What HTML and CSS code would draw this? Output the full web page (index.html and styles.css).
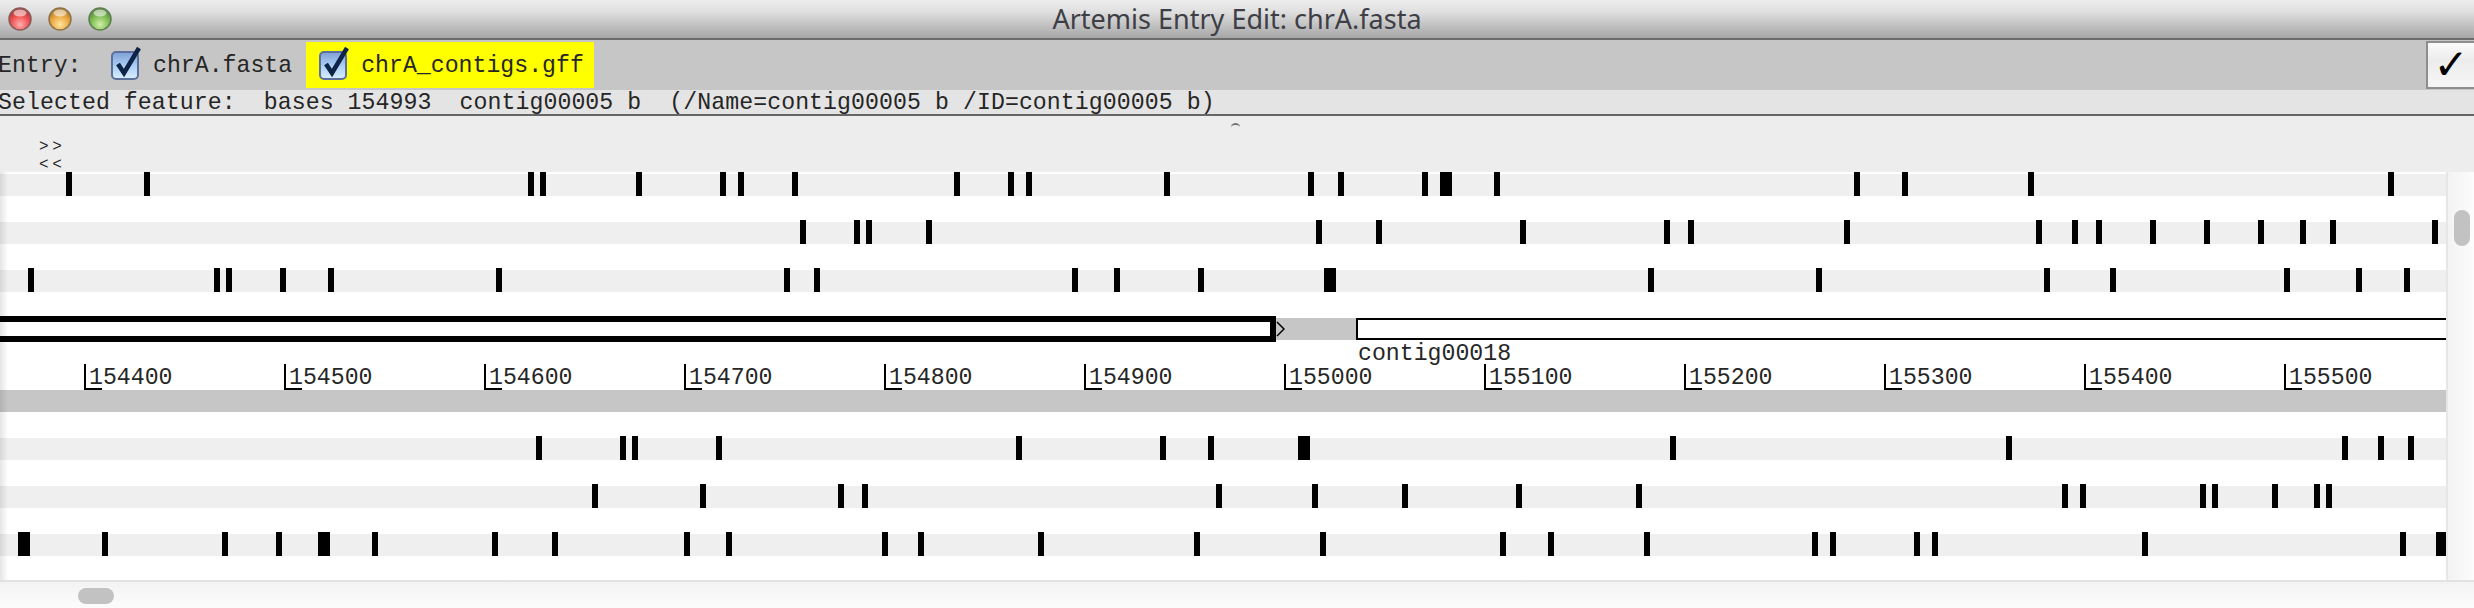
FILE: index.html
```html
<!DOCTYPE html>
<html lang="en">
<head>
<meta charset="utf-8">
<title>Artemis Entry Edit: chrA.fasta</title>
<link rel="stylesheet" href="styles.css">
</head>
<body>
<svg class="defs" width="0" height="0" aria-hidden="true">
  <defs>
    <linearGradient id="boxfill" x1="0" y1="0" x2="0" y2="1">
      <stop offset="0" stop-color="#7f9fd6"/>
      <stop offset="0.5" stop-color="#a9cdf2"/>
      <stop offset="1" stop-color="#d9effd"/>
    </linearGradient>
    <symbol id="tick-box" viewBox="0 0 32 34">
      <rect x="1" y="6" width="26" height="27" rx="4" fill="url(#boxfill)" stroke="#5d6f9c" stroke-width="2"/>
      <path d="M7 18 L13 27 L28 2" fill="none" stroke="#0d2347" stroke-width="4.5"/>
    </symbol>
    <radialGradient id="red" cx="0.5" cy="0.75" r="0.7">
      <stop offset="0" stop-color="#ffb0b0"/><stop offset="0.6" stop-color="#f04f4f"/><stop offset="1" stop-color="#a83a3a"/>
    </radialGradient>
    <radialGradient id="amber" cx="0.5" cy="0.75" r="0.7">
      <stop offset="0" stop-color="#ffe6a0"/><stop offset="0.6" stop-color="#eaa53e"/><stop offset="1" stop-color="#a67a32"/>
    </radialGradient>
    <radialGradient id="green" cx="0.5" cy="0.75" r="0.7">
      <stop offset="0" stop-color="#d0f0a8"/><stop offset="0.6" stop-color="#7dbb52"/><stop offset="1" stop-color="#58843f"/>
    </radialGradient>
  </defs>
</svg>
<header class="titlebar">
  <div class="lights">
    <svg class="light" viewBox="0 0 24 24"><circle cx="12" cy="12" r="11" fill="url(#red)" stroke="#8a5a5a" stroke-width="1.5"/><ellipse cx="12" cy="6" rx="6.5" ry="3.5" fill="#fff" opacity=".55"/></svg>
    <svg class="light" viewBox="0 0 24 24"><circle cx="12" cy="12" r="11" fill="url(#amber)" stroke="#8f7448" stroke-width="1.5"/><ellipse cx="12" cy="6" rx="6.5" ry="3.5" fill="#fff" opacity=".55"/></svg>
    <svg class="light" viewBox="0 0 24 24"><circle cx="12" cy="12" r="11" fill="url(#green)" stroke="#5f7f50" stroke-width="1.5"/><ellipse cx="12" cy="6" rx="6.5" ry="3.5" fill="#fff" opacity=".55"/></svg>
  </div>
  <div class="title">Artemis Entry Edit: chrA.fasta</div>
</header>
<div class="toolbar">
  <span class="entry-label">Entry:</span>
  <label class="entry"><svg class="check"><use href="#tick-box"/></svg><span>chrA.fasta</span></label>
  <label class="entry entry-active"><svg class="check"><use href="#tick-box"/></svg><span>chrA_contigs.gff</span></label>
  <button class="done" type="button">✓</button>
</div>
<div class="info">Selected feature:  bases 154993  contig00005 b  (/Name=contig00005 b /ID=contig00005 b)</div>
<div class="nav-area">
  <span class="handle"></span>
  <div class="nav-marks"><div>&gt;&gt;</div><div>&lt;&lt;</div></div>
</div>
<main class="viewer">
  <div class="canvas">
    <div class="track track-first">
      <i style="left:66px"></i><i style="left:144px"></i><i style="left:528px"></i><i style="left:540px"></i><i style="left:636px"></i><i style="left:720px"></i><i style="left:738px"></i><i style="left:792px"></i><i style="left:954px"></i><i style="left:1008px"></i><i style="left:1026px"></i><i style="left:1164px"></i><i style="left:1308px"></i><i style="left:1338px"></i><i style="left:1422px"></i><i class="wide" style="left:1440px"></i><i style="left:1494px"></i><i style="left:1854px"></i><i style="left:1902px"></i><i style="left:2028px"></i><i style="left:2388px"></i>
    </div>
    <div class="track">
      <i style="left:800px"></i><i style="left:854px"></i><i style="left:866px"></i><i style="left:926px"></i><i style="left:1316px"></i><i style="left:1376px"></i><i style="left:1520px"></i><i style="left:1664px"></i><i style="left:1688px"></i><i style="left:1844px"></i><i style="left:2036px"></i><i style="left:2072px"></i><i style="left:2096px"></i><i style="left:2150px"></i><i style="left:2204px"></i><i style="left:2258px"></i><i style="left:2300px"></i><i style="left:2330px"></i><i style="left:2432px"></i>
    </div>
    <div class="track">
      <i style="left:28px"></i><i style="left:214px"></i><i style="left:226px"></i><i style="left:280px"></i><i style="left:328px"></i><i style="left:496px"></i><i style="left:784px"></i><i style="left:814px"></i><i style="left:1072px"></i><i style="left:1114px"></i><i style="left:1198px"></i><i class="wide" style="left:1324px"></i><i style="left:1648px"></i><i style="left:1816px"></i><i style="left:2044px"></i><i style="left:2110px"></i><i style="left:2284px"></i><i style="left:2356px"></i><i style="left:2404px"></i>
    </div>
    <div class="contigs">
      <div class="contig contig-selected"></div>
      <div class="gap">
        <svg class="arrow" viewBox="0 0 9 16"><path d="M1 1 L8 8 L1 15" fill="none" stroke="#000" stroke-width="1.5"/></svg>
      </div>
      <div class="contig contig-next"></div>
    </div>
    <div class="contig-labels">contig00018</div>
    <div class="ruler">
      <span class="mark">154400</span><span class="mark">154500</span><span class="mark">154600</span><span class="mark">154700</span><span class="mark">154800</span><span class="mark">154900</span><span class="mark">155000</span><span class="mark">155100</span><span class="mark">155200</span><span class="mark">155300</span><span class="mark">155400</span><span class="mark">155500</span>
    </div>
    <div class="strand-bar"></div>
    <div class="track">
      <i style="left:536px"></i><i style="left:620px"></i><i style="left:632px"></i><i style="left:716px"></i><i style="left:1016px"></i><i style="left:1160px"></i><i style="left:1208px"></i><i class="wide" style="left:1298px"></i><i style="left:1670px"></i><i style="left:2006px"></i><i style="left:2342px"></i><i style="left:2378px"></i><i style="left:2408px"></i>
    </div>
    <div class="track">
      <i style="left:592px"></i><i style="left:700px"></i><i style="left:838px"></i><i style="left:862px"></i><i style="left:1216px"></i><i style="left:1312px"></i><i style="left:1402px"></i><i style="left:1516px"></i><i style="left:1636px"></i><i style="left:2062px"></i><i style="left:2080px"></i><i style="left:2200px"></i><i style="left:2212px"></i><i style="left:2272px"></i><i style="left:2314px"></i><i style="left:2326px"></i>
    </div>
    <div class="track">
      <i class="wide" style="left:18px"></i><i style="left:102px"></i><i style="left:222px"></i><i style="left:276px"></i><i class="wide" style="left:318px"></i><i style="left:372px"></i><i style="left:492px"></i><i style="left:552px"></i><i style="left:684px"></i><i style="left:726px"></i><i style="left:882px"></i><i style="left:918px"></i><i style="left:1038px"></i><i style="left:1194px"></i><i style="left:1320px"></i><i style="left:1500px"></i><i style="left:1548px"></i><i style="left:1644px"></i><i style="left:1812px"></i><i style="left:1830px"></i><i style="left:1914px"></i><i style="left:1932px"></i><i style="left:2142px"></i><i style="left:2400px"></i><i class="wide" style="left:2436px"></i>
    </div>
  </div>
  <div class="vscroll"><span class="vthumb"></span></div>
</main>
<div class="hscroll"><span class="hthumb"></span></div>
</body>
</html>
```

FILE: styles.css
```css
* { box-sizing: border-box; }
html, body { margin: 0; padding: 0; }
body {
  width: 2474px;
  height: 608px;
  overflow: hidden;
  background: #fff;
  color: #262626;
  font-family: "Liberation Mono", monospace;
  font-size: 23.2px;
  display: flex;
  flex-direction: column;
  position: relative;
}
.defs { position: absolute; }

.titlebar {
  height: 40px;
  flex: none;
  border-bottom: 2px solid #6c6c6c;
  background: linear-gradient(#ececec, #e0e0e0 30%, #a6a6a6);
  display: flex;
  align-items: center;
  position: relative;
}
.lights { display: flex; gap: 16px; padding-left: 8px; }
.light { width: 24px; height: 24px; display: block; }
.title {
  position: absolute;
  left: 0;
  right: 0;
  top: 2px;
  text-align: center;
  font-family: "Noto Sans", sans-serif;
  font-size: 27px;
  line-height: 34px;
  color: #3e3e46;
}

.toolbar {
  height: 50px;
  flex: none;
  background: #c6c6c6;
  display: flex;
  align-items: center;
  white-space: pre;
  line-height: 46px;
}
.entry-label {
  width: 110px;
  margin-left: -2px;
  flex: none;
  padding-top: 2px;
}
.entry {
  display: flex;
  align-items: center;
  height: 46px;
  padding: 2px 0 0 3px;
  gap: 10px;
}
.entry-active {
  margin-left: 14px;
  padding: 2px 10px 0 13px;
  background: #ff0;
}
.check { width: 32px; height: 34px; display: block; margin-top: -6px; flex: none; }
.done {
  margin-left: auto;
  width: 48px;
  height: 48px;
  padding: 0;
  border: 2px solid #8e8e8e;
  border-right: 0;
  background: linear-gradient(#fafafa, #ececec 40%, #f6f6f6);
  font-family: "DejaVu Sans", sans-serif;
  font-size: 42px;
  font-weight: 700;
  line-height: 1;
  color: #000;
}

.info {
  height: 26px;
  flex: none;
  background: #e4e4e4;
  border-bottom: 2px solid #666;
  text-indent: -2px;
  letter-spacing: .07px;
  white-space: pre;
  line-height: 27px;
}

.nav-area {
  height: 56px;
  flex: none;
  background: #ededed;
  padding: 22px 0 0 39px;
  position: relative;
  font-size: 16px;
  letter-spacing: 3.6px;
  line-height: 18px;
}
.nav-marks { white-space: pre; }
.handle {
  position: absolute;
  left: 1231px;
  top: 7px;
  width: 9px;
  height: 6px;
  border-radius: 5px 5px 0 0;
  border-top: 2px solid #777;
}

.viewer {
  height: 410px;
  flex: none;
  display: flex;
  position: relative;
  border-bottom: 2px solid #e2e2e2;
}
.viewer::before {
  content: "";
  position: absolute;
  left: 0;
  top: 0;
  bottom: 0;
  width: 8px;
  z-index: 2;
  background: linear-gradient(to right, rgba(0, 0, 0, .1), rgba(0, 0, 0, 0));
}
.canvas {
  flex: 1;
  min-width: 0;
  overflow: hidden;
  background: #fff;
  display: flex;
  flex-direction: column;
  padding-bottom: 24px;
}
.track {
  position: relative;
  height: 24px;
  flex: none;
  border-top: 2px solid #fff;
  background: #efefef;
  margin-bottom: 24px;
}
.track:last-child { margin-bottom: 0; }
.track i {
  position: absolute;
  top: -2px;
  bottom: 0;
  width: 6px;
  background: #000;
}
.track i.wide { width: 12px; }

.contigs { height: 26px; flex: none; display: flex; }
.contig-selected {
  width: 1276px;
  flex: none;
  border: 6px solid #000;
  border-left: 0;
  background: #fff;
}
.gap {
  width: 80px;
  flex: none;
  margin: 2px 0;
  background: #c6c6c6;
  display: flex;
  align-items: center;
}
.arrow { width: 9px; height: 16px; display: block; }
.contig-next {
  flex: 1;
  margin: 2px 0;
  border: 2px solid #000;
  border-right: 0;
  background: #fff;
}
.contig-labels {
  height: 22px;
  flex: none;
  padding: 0 0 0 1358px;
  line-height: 25px;
  white-space: pre;
}

.ruler {
  height: 26px;
  flex: none;
  display: flex;
  padding-left: 84px;
}
.mark {
  width: 200px;
  flex: none;
  position: relative;
  padding-left: 5px;
  line-height: 29px;
}
.mark::before {
  content: "";
  position: absolute;
  left: 0;
  top: 0;
  bottom: 0;
  width: 16px;
  border-left: 2px solid #000;
  border-bottom: 2px solid #000;
}
.strand-bar { height: 22px; flex: none; background: #c6c6c6; margin-bottom: 24px; }

.vscroll {
  width: 28px;
  flex: none;
  border-left: 2px solid #e6e6e6;
  background: linear-gradient(to right, #f3f3f3, #fcfcfc);
  padding: 38px 0 0 6px;
}
.vthumb {
  display: block;
  width: 16px;
  height: 36px;
  border-radius: 8px;
  background: #c2c2c2;
}
.hscroll {
  height: 26px;
  flex: none;
  background: linear-gradient(#f3f3f3, #fcfcfc);
  padding: 6px 0 0 78px;
}
.hthumb {
  display: block;
  width: 36px;
  height: 16px;
  border-radius: 8px;
  background: #c2c2c2;
}
```
